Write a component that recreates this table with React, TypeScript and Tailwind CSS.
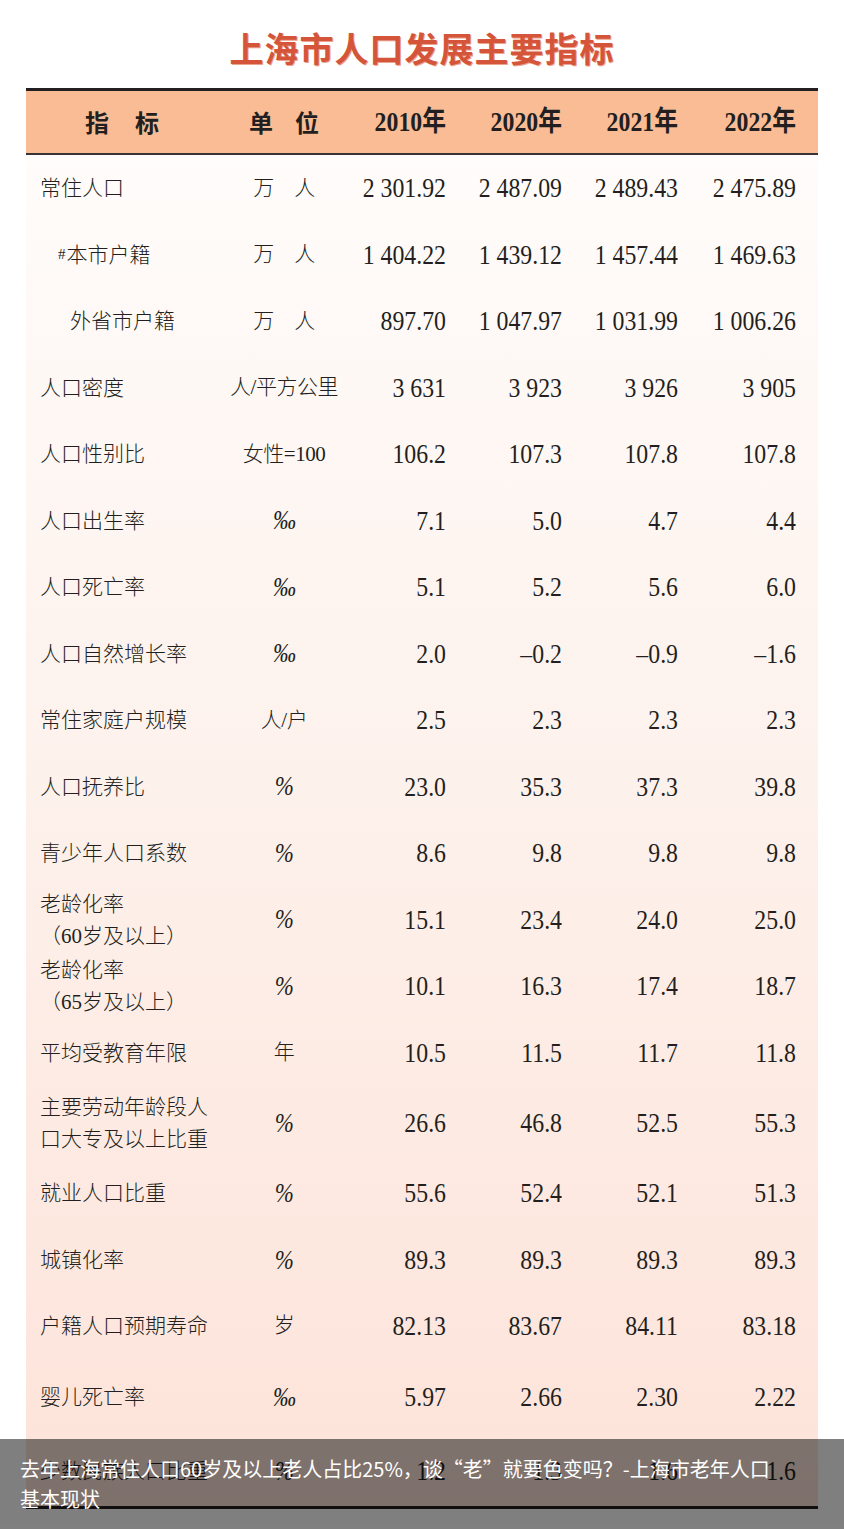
import React from "react";

type Row = {
  label: string[];
  sup?: string;
  indent?: string;
  unit: string;
  v: string[];
  h: string;
};

const rows: Row[] = [
  { label: ["常住人口"], unit: "万　人", v: ["2 301.92", "2 487.09", "2 489.43", "2 475.89"], h: "h-[66.5px]" },
  { label: ["本市户籍"], sup: "#", indent: "pl-[32px]", unit: "万　人", v: ["1 404.22", "1 439.12", "1 457.44", "1 469.63"], h: "h-[66.5px]" },
  { label: ["外省市户籍"], indent: "pl-[44px]", unit: "万　人", v: ["897.70", "1 047.97", "1 031.99", "1 006.26"], h: "h-[66.5px]" },
  { label: ["人口密度"], unit: "人/平方公里", v: ["3 631", "3 923", "3 926", "3 905"], h: "h-[66.5px]" },
  { label: ["人口性别比"], unit: "女性=100", v: ["106.2", "107.3", "107.8", "107.8"], h: "h-[66.5px]" },
  { label: ["人口出生率"], unit: "‰", v: ["7.1", "5.0", "4.7", "4.4"], h: "h-[66.5px]" },
  { label: ["人口死亡率"], unit: "‰", v: ["5.1", "5.2", "5.6", "6.0"], h: "h-[66.5px]" },
  { label: ["人口自然增长率"], unit: "‰", v: ["2.0", "–0.2", "–0.9", "–1.6"], h: "h-[66.5px]" },
  { label: ["常住家庭户规模"], unit: "人/户", v: ["2.5", "2.3", "2.3", "2.3"], h: "h-[66.5px]" },
  { label: ["人口抚养比"], unit: "%", v: ["23.0", "35.3", "37.3", "39.8"], h: "h-[66.5px]" },
  { label: ["青少年人口系数"], unit: "%", v: ["8.6", "9.8", "9.8", "9.8"], h: "h-[66.5px]" },
  { label: ["老龄化率", "（60岁及以上）"], unit: "%", v: ["15.1", "23.4", "24.0", "25.0"], h: "h-[66.5px]" },
  { label: ["老龄化率", "（65岁及以上）"], unit: "%", v: ["10.1", "16.3", "17.4", "18.7"], h: "h-[66.5px]" },
  { label: ["平均受教育年限"], unit: "年", v: ["10.5", "11.5", "11.7", "11.8"], h: "h-[66.5px]" },
  { label: ["主要劳动年龄段人", "口大专及以上比重"], unit: "%", v: ["26.6", "46.8", "52.5", "55.3"], h: "h-[74px]" },
  { label: ["就业人口比重"], unit: "%", v: ["55.6", "52.4", "52.1", "51.3"], h: "h-[66px]" },
  { label: ["城镇化率"], unit: "%", v: ["89.3", "89.3", "89.3", "89.3"], h: "h-[68px]" },
  { label: ["户籍人口预期寿命"], unit: "岁", v: ["82.13", "83.67", "84.11", "83.18"], h: "h-[64px]" },
  { label: ["婴儿死亡率"], unit: "‰", v: ["5.97", "2.66", "2.30", "2.22"], h: "h-[78px]" },
  { label: ["少数民族人口比重"], unit: "%", v: ["1.2", "1.3", "1.6", "1.6"], h: "h-[70px]" },
];

const years = ["2010年", "2020年", "2021年", "2022年"];
const grid = "grid grid-cols-[200px_116px_116px_116px_116px_1fr]";
const serif = "font-['Liberation_Serif','Noto_Sans_CJK_SC',serif]";

function Num({ children, bold }: { children: React.ReactNode; bold?: boolean }) {
  return (
    <span
      className={`inline-block origin-right scale-x-[0.85] whitespace-pre text-[28px] leading-none ${bold ? "font-bold" : ""}`}
    >
      {children}
    </span>
  );
}

export default function App() {
  return (
    <div className={`relative h-[1529px] w-[844px] overflow-hidden bg-white ${serif} text-[#231f20]`}>
      {/* 标题 */}
      <div className="flex h-[88px] items-center justify-center pt-[6px]">
        <h1 className="font-['Noto_Sans_CJK_SC',sans-serif] text-[34px] font-bold tracking-[1px] text-[#d5553a] [text-shadow:1px_1px_0_#eba48e]">
          上海市人口发展主要指标
        </h1>
      </div>

      <div className="mx-[26px] border-y-[3px] border-[#231f20] bg-gradient-to-b from-[#fffdfc] via-[#fdf1eb] to-[#fde3d9]">
        {/* 表头 */}
        <div className={`${grid} h-[64px] items-center border-b-2 border-[#3a3334] bg-[#f9bc95]`}>
          <div className="flex justify-center gap-[26px] pr-2 font-['Noto_Sans_CJK_SC',sans-serif] text-[24px] font-bold">
            <span>指</span>
            <span>标</span>
          </div>
          <div className="flex justify-center gap-[22px] font-['Noto_Sans_CJK_SC',sans-serif] text-[24px] font-bold">
            <span>单</span>
            <span>位</span>
          </div>
          {years.map((y, i) => (
            <div key={y} className={`flex justify-end ${i === 3 ? "pr-[22px]" : "pr-3"}`}>
              <Num bold>{y}</Num>
            </div>
          ))}
        </div>

        {/* 数据行 */}
        {rows.map((r) => (
          <div key={r.label.join("")} className={`${grid} ${r.h} items-center`}>
            <div className={`flex flex-col text-[21px] font-light leading-[32px] ${r.indent ?? "pl-[14px]"}`}>
              {r.label.map((l, i) => (
                <span key={i} className="whitespace-nowrap">
                  {i === 0 && r.sup && <sup className="relative -top-[3px] mr-[1px] text-[15px]">{r.sup}</sup>}
                  {l}
                </span>
              ))}
            </div>
            <div className="flex justify-center whitespace-nowrap text-[21px] font-light">
              {/[%‰]/.test(r.unit) ? (
                <span className="inline-block scale-x-[0.85] text-[27px] italic leading-none">{r.unit}</span>
              ) : (
                <span className="tracking-[-0.5px]">{r.unit}</span>
              )}
            </div>
            {r.v.map((v, i) => (
              <div key={i} className={`flex justify-end ${i === 3 ? "pr-[22px]" : "pr-3"}`}>
                <Num>{v}</Num>
              </div>
            ))}
          </div>
        ))}
      </div>

      {/* 底部说明浮层 */}
      <div className="absolute inset-x-0 bottom-0 h-[90px] bg-black/50 px-5 pt-[15px] font-['Noto_Sans_CJK_SC',sans-serif] text-[20px] leading-[30px] text-white">
        去年上海常住人口60岁及以上老人占比25%，谈“老”就要色变吗？-上海市老年人口
        <br />
        基本现状
      </div>
    </div>
  );
}
